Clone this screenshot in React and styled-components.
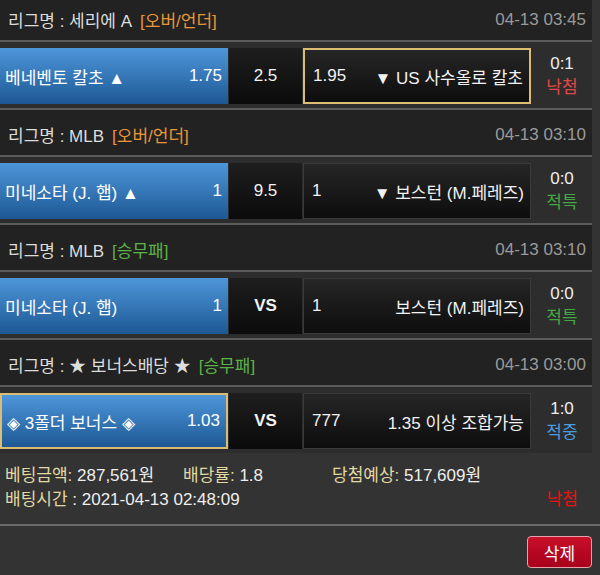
import React from "react";
import styled, { createGlobalStyle } from "styled-components";

const Global = createGlobalStyle`
  html, body { margin: 0; padding: 0; background: #333; }
  body { font-family: "Liberation Sans", "Noto Sans CJK KR", sans-serif; color: #eee; overflow: hidden; }
  * { box-sizing: border-box; }
`;

const Page = styled.div`
  width: 600px;
  height: 575px;
  overflow: hidden;
  background: #333;
`;

const List = styled.div`
  width: 592px;
  margin-top: -7px;
`;

const Section = styled.div`
  border-top: 2px solid #5c5c5c;
  background: #2d2d2d;
`;

const Header = styled.div`
  height: 47px;
  padding: 4px 6px 0 8px;
  display: flex;
  align-items: center;
  justify-content: space-between;
  background: #222;
  border-bottom: 2px solid #5c5c5c;
  font-size: 17px;
  color: #ddd;
`;

const League = styled.span`
  white-space: pre;
`;

const Tag = styled.span`
  margin-left: 8px;
  color: ${(p) => (p.$kind === "green" ? "#5db446" : "#e8963a")};
`;

const Time = styled.span`
  color: #9a9a9a;
`;

const Row = styled.div`
  display: grid;
  grid-template-columns: 228px 73px 228px 1fr;
  column-gap: 1px;
  padding: 6px 0 4px;
  height: 66px;
`;

const Home = styled.div`
  display: flex;
  align-items: center;
  justify-content: space-between;
  padding: 0 6px 0 5px;
  background: linear-gradient(#4e96da, #1d5894);
  border: ${(p) => (p.$sel ? "2px solid #dcbc72" : "none")};
  font-size: 17px;
  color: #fff;
  white-space: pre;
`;

const Mid = styled.div`
  display: flex;
  align-items: center;
  justify-content: center;
  background: linear-gradient(#1e1e1e, #0b0b0b);
  font-size: 17px;
  font-weight: ${(p) => (p.$vs ? 700 : 400)};
  color: #f2f2f2;
`;

const Away = styled.div`
  display: flex;
  align-items: center;
  justify-content: space-between;
  padding: 0 6px 0 8px;
  background: linear-gradient(#262626, #0d0d0d);
  border: ${(p) => (p.$sel ? "2px solid #dcbc72" : "1px solid #3a3a3a")};
  font-size: 17px;
  color: #f2f2f2;
  white-space: pre;
`;

const Score = styled.div`
  display: flex;
  flex-direction: column;
  align-items: center;
  justify-content: center;
  font-size: 17px;
  line-height: 24px;
  color: #eee;
`;

const statusColors = { lose: "#e04848", void: "#46a844", win: "#4a9ee0" };

const Status = styled.span`
  color: ${(p) => statusColors[p.$s]};
`;

const Footer = styled.div`
  padding: 11px 22px 12px 5px;
  font-size: 17px;
  line-height: 24px;
  border-bottom: 2px solid #6a6a6a;
`;

const FootLine = styled.div`
  display: grid;
  grid-template-columns: ${(p) => p.$cols};
  align-items: center;
`;

const Label = styled.span`
  color: #e2d9a2;
`;

const Val = styled.span`
  color: #eee;
`;

const FootLose = styled.span`
  color: #e41414;
  justify-self: end;
`;

const Actions = styled.div`
  display: flex;
  justify-content: flex-end;
  padding: 10px 8px 0 0;
`;

const DeleteBtn = styled.button`
  width: 65px;
  height: 32px;
  border-radius: 4px;
  border: 1px solid #e8a0a8;
  background: linear-gradient(#c8102a, #a8001c);
  color: #fff;
  font-family: inherit;
  font-size: 17px;
  cursor: pointer;
`;

const bets = [
  {
    league: "리그명 : 세리에 A",
    tag: "[오버/언더]",
    tagKind: "orange",
    time: "04-13 03:45",
    home: "베네벤토 칼초 ▲",
    homeOdd: "1.75",
    mid: "2.5",
    awayOdd: "1.95",
    away: "▼ US 사수올로 칼초",
    awaySel: true,
    score: "0:1",
    status: "낙첨",
    s: "lose",
  },
  {
    league: "리그명 : MLB",
    tag: "[오버/언더]",
    tagKind: "orange",
    time: "04-13 03:10",
    home: "미네소타 (J. 햅) ▲",
    homeOdd: "1",
    mid: "9.5",
    awayOdd: "1",
    away: "▼ 보스턴 (M.페레즈)",
    score: "0:0",
    status: "적특",
    s: "void",
  },
  {
    league: "리그명 : MLB",
    tag: "[승무패]",
    tagKind: "green",
    time: "04-13 03:10",
    home: "미네소타 (J. 햅)",
    homeOdd: "1",
    mid: "VS",
    vs: true,
    awayOdd: "1",
    away: "보스턴 (M.페레즈)",
    score: "0:0",
    status: "적특",
    s: "void",
  },
  {
    league: "리그명 : ★ 보너스배당 ★",
    tag: "[승무패]",
    tagKind: "green",
    time: "04-13 03:00",
    home: "◈ 3폴더 보너스 ◈",
    homeOdd: "1.03",
    homeSel: true,
    mid: "VS",
    vs: true,
    awayOdd: "777",
    away: "1.35 이상 조합가능",
    score: "1:0",
    status: "적중",
    s: "win",
  },
];

export default function App() {
  return (
    <Page>
      <Global />
      <List>
        {bets.map((b, i) => (
          <Section key={i}>
            <Header>
              <League>
                {b.league}
                <Tag $kind={b.tagKind}>{b.tag}</Tag>
              </League>
              <Time>{b.time}</Time>
            </Header>
            <Row>
              <Home $sel={b.homeSel}>
                <span>{b.home}</span>
                <span>{b.homeOdd}</span>
              </Home>
              <Mid $vs={b.vs}>{b.mid}</Mid>
              <Away $sel={b.awaySel}>
                <span>{b.awayOdd}</span>
                <span>{b.away}</span>
              </Away>
              <Score>
                <span>{b.score}</span>
                <Status $s={b.s}>{b.status}</Status>
              </Score>
            </Row>
          </Section>
        ))}
      </List>
      <Footer>
        <FootLine $cols="178px 149px 1fr">
          <span>
            <Label>베팅금액:</Label> <Val>287,561원</Val>
          </span>
          <span>
            <Label>배당률:</Label> <Val>1.8</Val>
          </span>
          <span>
            <Label>당첨예상:</Label> <Val>517,609원</Val>
          </span>
        </FootLine>
        <FootLine $cols="1fr auto">
          <span>
            <Label>배팅시간</Label> <Val>: 2021-04-13 02:48:09</Val>
          </span>
          <FootLose>낙첨</FootLose>
        </FootLine>
      </Footer>
      <Actions>
        <DeleteBtn>삭제</DeleteBtn>
      </Actions>
    </Page>
  );
}
